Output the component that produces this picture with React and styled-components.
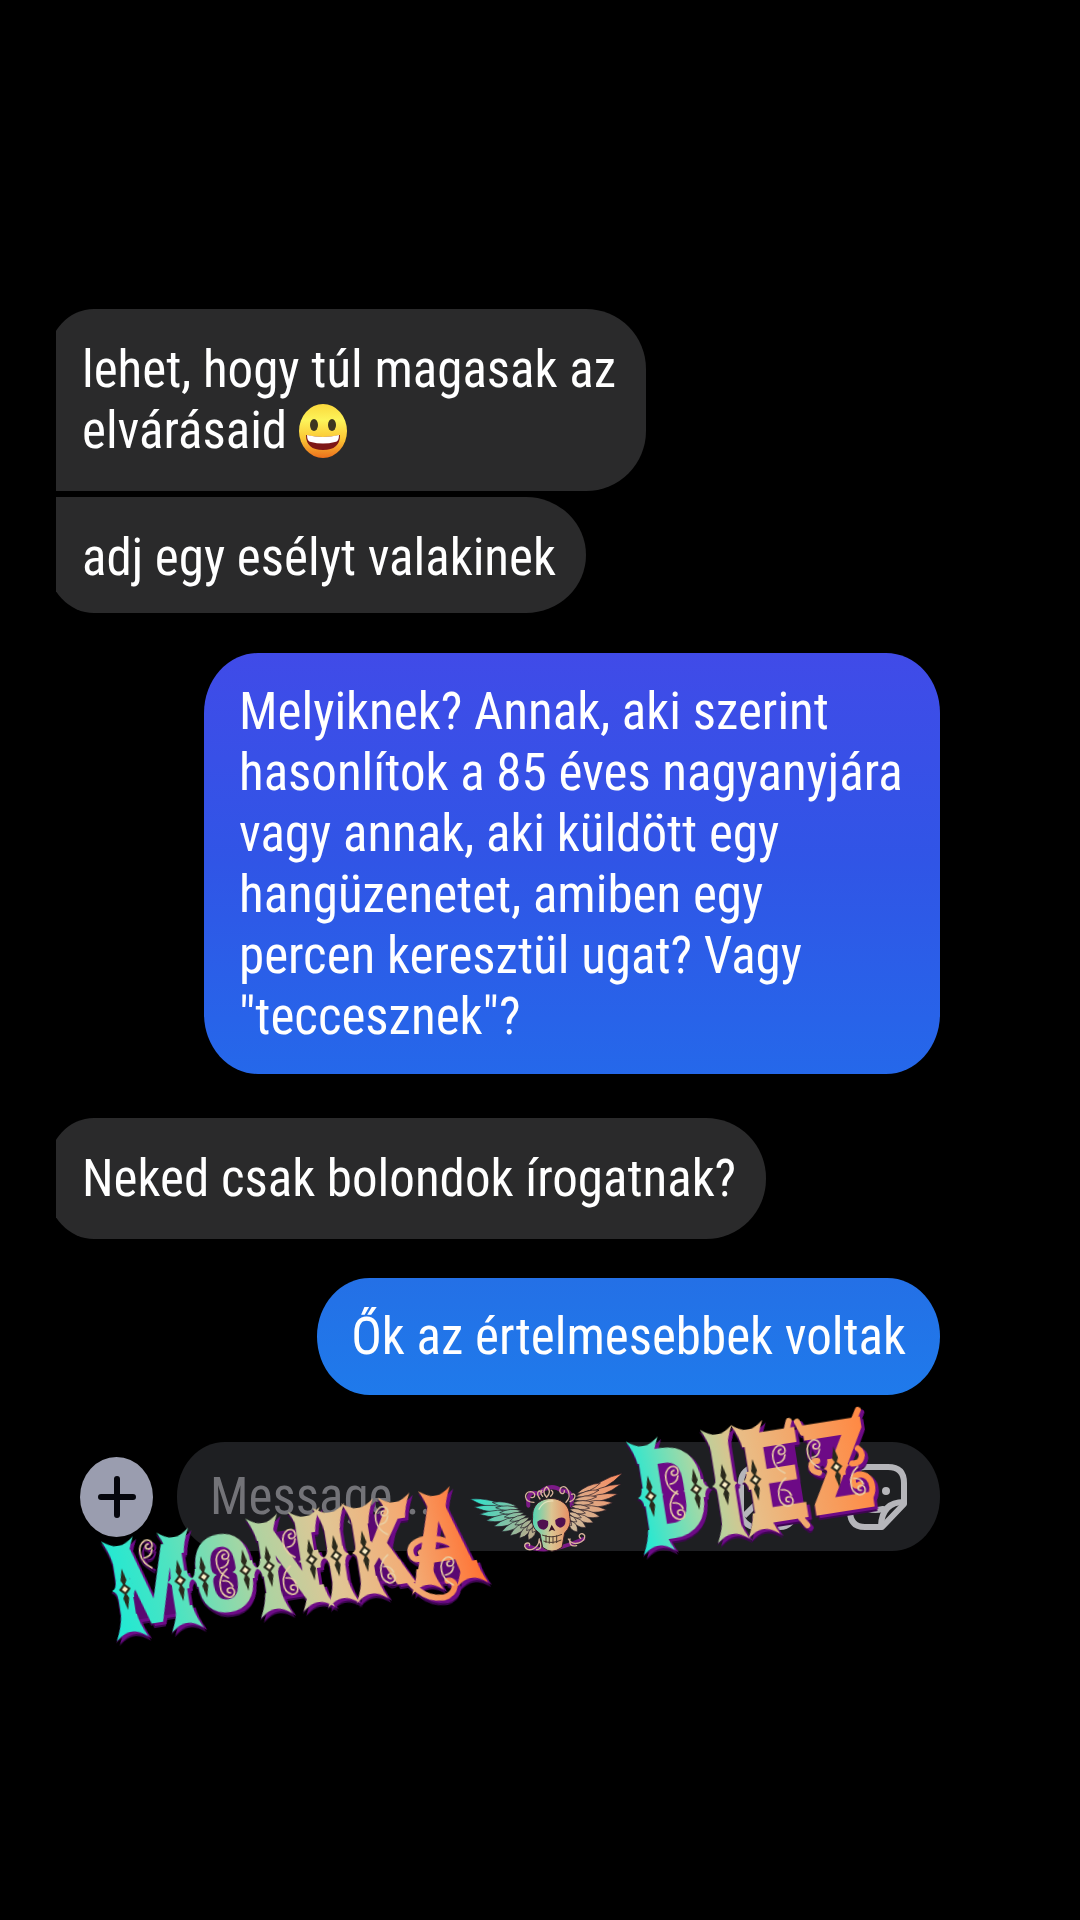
import React from 'react';
import styled, { createGlobalStyle } from 'styled-components';

const RECEIVED = [
	{ id: 1, text: 'lehet, hogy túl magasak az elvárásaid', emoji: true, shape: 'first' },
	{ id: 2, text: 'adj egy esélyt valakinek', shape: 'last' },
];

const Grin = () => (
	<EmojiSvg viewBox='0 0 48 54' role='img' aria-label='grinning face'>
		<defs>
			<linearGradient id='face' x1='0' y1='0' x2='0' y2='1'>
				<stop offset='0' stopColor='#fbd83c' />
				<stop offset='0.3' stopColor='#fdf45a' />
				<stop offset='0.65' stopColor='#fbc634' />
				<stop offset='1' stopColor='#ec6f1c' />
			</linearGradient>
		</defs>
		<ellipse cx='24' cy='27' rx='24' ry='27' fill='url(#face)' />
		<ellipse cx='15' cy='21' rx='4' ry='6' fill='#3e3620' />
		<ellipse cx='33' cy='21' rx='4' ry='6' fill='#3e3620' />
		<path d='M7 31 Q24 35 41 31 Q41 46 24 46 Q7 46 7 31Z' fill='#7d1716' />
		<path d='M8 31 Q24 35 40 31 Q40 38 36 38 Q24 41 12 38 Q8 38 8 31Z' fill='#fff' />
	</EmojiSvg>
);

const feather = ([rx, ry], [tx, ty], w) => {
	const mx = (rx + tx) / 2;
	const my = (ry + ty) / 2;
	const len = Math.hypot(tx - rx, ty - ry);
	const nx = (-(ty - ry) / len) * w;
	const ny = ((tx - rx) / len) * w;
	return `M${rx} ${ry} Q${mx + nx} ${my + ny} ${tx} ${ty} Q${mx - nx} ${my - ny} ${rx} ${ry}Z`;
};

const LEFT_TIPS = [[30, 180], [42, 204], [58, 226], [78, 245], [102, 262], [125, 278], [150, 290], [178, 298], [205, 303]];
const RIGHT_TIPS = [[487, 103], [483, 135], [473, 165], [458, 191], [440, 213], [420, 233], [400, 251], [378, 266], [352, 279]];

const Wing = ({ tips, from, to, fill }) => (
	<g fill={fill} stroke='#231a25' strokeWidth='2'>
		{tips.map((tip, i) => {
			const t = i / (tips.length - 1);
			const root = [from[0] + (to[0] - from[0]) * t, from[1] + (to[1] - from[1]) * t];
			return <path key={i} d={feather(root, tip, 20)} />;
		})}
		{tips.map((tip, i) => {
			const t = i / (tips.length - 1);
			const root = [from[0] + 20 * (to[0] > from[0] ? 1 : -1) + (to[0] - from[0]) * t * 0.8, from[1] + (to[1] - from[1]) * t - 6];
			const half = [root[0] + (tip[0] - root[0]) * 0.52, root[1] + (tip[1] - root[1]) * 0.52];
			return <path key={i} d={feather(root, half, 14)} />;
		})}
	</g>
);

const Skull = () => (
	<g transform='translate(460 1440) scale(0.3333)'>
		<g fill='none' stroke='#7b1a86' strokeWidth='12' strokeLinecap='round'>
			<path d='M205 200 Q200 150 235 165 Q270 130 305 155 Q340 150 335 200' />
			<path d='M200 320 Q260 350 370 300' />
		</g>
		<Wing tips={LEFT_TIPS} from={[150, 208]} to={[226, 262]} fill='url(#wingLeft)' />
		<Wing tips={RIGHT_TIPS} from={[370, 170]} to={[328, 245]} fill='url(#wingRight)' />
		<g fill='none' stroke='#d7b39b' strokeWidth='4' strokeLinecap='round'>
			<path d='M222 190 C190 190 190 158 212 158 C230 160 226 180 213 175' />
			<path d='M240 180 C225 160 238 150 246 160' />
			<path d='M318 190 C340 170 318 130 302 147 C292 165 315 170 313 155' />
			<path d='M330 188 C350 180 348 160 335 166' />
			<path d='M260 175 C250 165 248 152 260 143 C272 152 270 165 260 175 M248 172 Q238 160 246 154 M272 172 Q284 160 274 154' />
			<path d='M238 300 C235 335 200 340 194 322 C194 308 214 310 208 320 M238 305 Q250 330 230 332' />
			<path d='M325 300 C340 325 378 310 374 290 C366 276 350 290 362 298 M330 300 Q325 325 350 320' />
		</g>
		<path
			d='M218 235 C212 160 330 160 329 232 C334 252 328 262 322 272 L314 282 L306 325 Q275 348 248 325 L240 284 L226 272 Q214 258 218 235Z'
			fill='url(#bone)'
			stroke='#3a2029'
			strokeWidth='3'
		/>
		<path d='M232 248 Q246 236 264 246 Q268 266 252 272 Q232 272 232 248Z M286 243 Q304 230 316 240 Q320 262 300 266 Q284 262 286 243Z' fill='#50104f' />
		<path d='M275 257 L286 276 L276 272 L266 278Z' fill='#361226' />
		<path d='M246 288 Q276 300 306 286 M250 306 Q276 316 304 303 M258 288 V312 M268 291 V314 M279 291 V314 M290 289 V312' fill='none' stroke='#4d3a30' strokeWidth='3' />
		<path d='M236 212 Q250 184 280 186' fill='none' stroke='#fff1cf' strokeWidth='4' opacity='0.6' />
	</g>
);

// flared horn at the end of a stem, dir 1 points up and -1 points down
const spur = ([x, y, dir]) => {
	const at = (dx, dy) => `${x + dx} ${y + dy * dir}`;
	return `M${at(-16, -12)} Q${at(-6, -4)} ${at(0, -5)} Q${at(6, -4)} ${at(16, -12)} Q${at(9, 2)} ${at(8, 12)} L${at(-8, 12)} Q${at(-9, 2)} ${at(-16, -12)}Z`;
};

const Ornaments = ({ spurs, diamonds, scrolls, curls, fill }) => (
	<g>
		<g fill={fill}>
			{spurs.map((s, i) => (
				<path key={i} d={spur(s)} />
			))}
			{diamonds.map(([x, y], i) => (
				<path key={i} d={`M${x - 13} ${y} Q${x - 8} ${y - 2} ${x - 8} ${y - 9} H${x + 8} Q${x + 8} ${y - 2} ${x + 13} ${y} Q${x + 8} ${y + 2} ${x + 8} ${y + 9} H${x - 8} Q${x - 8} ${y + 2} ${x - 13} ${y}Z`} />
			))}
		</g>
		<path d={curls} fill='none' stroke={fill} strokeWidth='6' strokeLinecap='round' />
		{diamonds.map(([x, y], i) => (
			<g key={i}>
				<path
					d={`M${x} ${y - 21} L${x + 3} ${y - 9} L${x + 1} ${y - 5} L${x + 6} ${y} L${x + 1} ${y + 5} L${x + 3} ${y + 9} L${x} ${y + 21} L${x - 3} ${y + 9} L${x - 1} ${y + 5} L${x - 6} ${y} L${x - 1} ${y - 5} L${x - 3} ${y - 9}Z`}
					fill='#2a2a1c'
				/>
				<path d={`M${x} ${y - 3} L${x + 3} ${y} L${x} ${y + 3} L${x - 3} ${y}Z`} fill='#fbeec6' />
			</g>
		))}
		<g fill='none' stroke='#e9cfa4' strokeWidth='1.6' strokeLinecap='round'>
			{scrolls.map(([x, y, dir], i) => (
				<path
					key={i}
					d={`M${x + 3} ${y + 17 * dir} c-12 ${-8 * dir} -12 ${-24 * dir} -3 ${-28 * dir} c8 ${-2 * dir} 9 ${9 * dir} 3 ${9 * dir} c-4 0 -4 ${-5 * dir} 0 ${-5 * dir} M${x - 3} ${y + 6 * dir} q7 0 9 ${-7 * dir}`}
				/>
			))}
		</g>
	</g>
);

const Wordmark = () => (
	<Artwork viewBox='90 1400 800 270'>
		<defs>
			<linearGradient id='monika' gradientUnits='userSpaceOnUse' x1='0' y1='0' x2='366' y2='-30'>
				<stop offset='0' stopColor='#1fe9d4' />
				<stop offset='0.18' stopColor='#4fe3c0' />
				<stop offset='0.38' stopColor='#a3d6a4' />
				<stop offset='0.62' stopColor='#e2c594' />
				<stop offset='0.82' stopColor='#f3ab74' />
				<stop offset='1' stopColor='#ff7436' />
			</linearGradient>
			<linearGradient id='diez' gradientUnits='userSpaceOnUse' x1='0' y1='0' x2='236' y2='-20'>
				<stop offset='0' stopColor='#1fe9d4' />
				<stop offset='0.28' stopColor='#a9d8a4' />
				<stop offset='0.5' stopColor='#e9bd86' />
				<stop offset='1' stopColor='#ff8a45' />
			</linearGradient>
			<linearGradient id='wingLeft' gradientUnits='userSpaceOnUse' x1='30' y1='180' x2='220' y2='260'>
				<stop offset='0' stopColor='#27e6cf' />
				<stop offset='1' stopColor='#b6ab8c' />
			</linearGradient>
			<linearGradient id='wingRight' gradientUnits='userSpaceOnUse' x1='330' y1='250' x2='487' y2='105'>
				<stop offset='0' stopColor='#cdb99a' />
				<stop offset='1' stopColor='#fb8a5e' />
			</linearGradient>
			<linearGradient id='bone' x1='0' x2='1'>
				<stop offset='0' stopColor='#4fd6b4' />
				<stop offset='0.5' stopColor='#dcc592' />
				<stop offset='1' stopColor='#e88d62' />
			</linearGradient>
		</defs>
		<Word transform='translate(117 1630) rotate(-9)'>
			<path d='M15 -56 L41 -8 L68 -56 V-6 H15Z M103 -62 h24 v49 h-24Z M162 -71 H203 V-6 H162Z M259 -75 L293 -70 L282 -40 L297 -6 H259Z M318 -30 H350 L359 4 H310Z' fill='#5a0872' />
			<Letters fill='url(#monika)'>MONIKA</Letters>
			<Ornaments
				fill='url(#monika)'
				spurs={[[14, -77, 1], [70, -77, 1], [14, 0, -1], [70, 0, -1], [160, -77, 1], [203, -77, 1], [160, 0, -1], [203, 0, -1], [228, -77, 1], [228, 0, -1], [257, -77, 1], [257, 0, -1], [294, -77, 1], [335, -77, 1], [313, 0, -1], [358, 0, -1]]}
				diamonds={[[14, -38], [70, -38], [94, -38], [136, -38], [160, -38], [203, -38], [228, -38], [257, -38]]}
				scrolls={[[41, -72, 1], [115, -50, 1], [115, -25, -1], [184, -60, 1], [178, -18, -1], [279, -68, 1], [276, -14, -1], [336, -8, 1]]}
				curls='M288 -22 C294 2 308 20 328 20 C342 18 344 4 334 4 M348 -28 C330 -46 300 -44 302 -28 C304 -18 316 -22 312 -28'
			/>
		</Word>
		<Word transform='translate(644 1544) rotate(-9)' $large>
			<path d='M21 -78 h31 v66 h-31Z M124 -84 h37 v78 h-37Z M171 -87 h41 l-20 45Z M228 -4 h-41 l24 -45 l17 16Z' fill='#6d0a86' />
			<Letters fill='url(#diez)'>DIEZ</Letters>
			<Ornaments
				fill='url(#diez)'
				spurs={[[14, -91, 1], [14, 0, -1], [89, -91, 1], [89, 0, -1], [120, -91, 1], [120, 0, -1]]}
				diamonds={[[14, -45], [60, -45], [89, -45], [120, -45], [202, -45]]}
				scrolls={[[38, -60, 1], [38, -29, -1], [147, -64, 1], [147, -25, -1], [182, -64, 1], [220, -25, -1]]}
				curls='M158 -88 L162 -98 M158 -2 L164 8 M174 -84 L170 -96 M226 -88 L232 -98 M218 -4 C238 -4 240 -34 222 -34 C212 -32 216 -20 222 -24 M184 -42 C174 -44 176 -56 184 -54 M218 -46 C228 -44 232 -54 226 -60'
			/>
		</Word>
		<Skull />
	</Artwork>
);

const App = () => (
	<Page>
		<GlobalStyle />
		<Thread>
			{RECEIVED.map((m) => (
				<Received key={m.id} $shape={m.shape}>
					{m.text} {m.emoji && <Grin />}
				</Received>
			))}
			<Sent $tall>
				Melyiknek? Annak, aki szerint hasonlítok a 85 éves nagyanyjára vagy annak, aki küldött egy hangüzenetet,
				amiben egy percen keresztül ugat? Vagy "teccesznek"?
			</Sent>
			<Received $shape='single'>Neked csak bolondok írogatnak?</Received>
			<Sent>Ők az értelmesebbek voltak</Sent>
		</Thread>
		<Composer>
			<AddButton type='button' aria-label='Add'>
				<svg width='38' height='42' viewBox='0 0 38 42'>
					<path d='M19 3 V39 M3 21 H35' stroke='#05060c' strokeWidth='6' strokeLinecap='round' />
				</svg>
			</AddButton>
			<Field>
				<MessageInput placeholder='Message...' aria-label='Message' />
				<IconButton type='button' aria-label='Gallery'>
					<svg width='60' height='66' viewBox='0 0 60 66' fill='none' stroke='#b5b5ba' strokeWidth='6' strokeLinejoin='round'>
						<rect x='3' y='3' width='54' height='60' rx='15' />
						<circle cx='20' cy='22' r='5' />
						<path d='M6 52 L20 38 L31 50 L42 34 L57 48' />
					</svg>
				</IconButton>
				<IconButton type='button' aria-label='Sticker'>
					<svg width='60' height='66' viewBox='0 0 60 66' fill='none' stroke='#b5b5ba' strokeWidth='6' strokeLinejoin='round'>
						<path d='M18 3 H41 Q57 3 57 19 V40 L35 63 H18 Q3 63 3 47 V19 Q3 3 18 3Z' />
						<path d='M57 38 Q35 38 34 62' />
						<path d='M16 42 Q24 48 36 45' strokeLinecap='round' />
						<circle cx='20' cy='27' r='4' fill='#b5b5ba' stroke='none' />
						<circle cx='39' cy='27' r='4' fill='#b5b5ba' stroke='none' />
					</svg>
				</IconButton>
			</Field>
			<Wordmark />
		</Composer>
	</Page>
);

export default App;

const GlobalStyle = createGlobalStyle`
	* {
		box-sizing: border-box;
	}
	body {
		margin: 0;
		background: #000;
	}
`;

const Page = styled.main`
	min-height: 100vh;
	padding: 309px 140px 0 56px;
	background: #000;
	color: #fff;
	font-family: 'Roboto Condensed', Roboto, sans-serif;
	font-size: 51px;
	line-height: 61px;
`;

const Thread = styled.section`
	display: flex;
	flex-direction: column;
	overflow: hidden;
`;

const shapes = {
	first: { radius: '46px 60px 60px 0 / 50px 60px 60px 0', padding: '30px 24px 30px 34px' },
	last: { radius: '0 60px 60px 46px / 0 58px 58px 50px', padding: '30px 30px 25px 34px' },
	single: { radius: '46px 60px 60px 46px / 50px 60px 60px 50px', padding: '30px 30px 30px 34px' },
};

const Received = styled.p`
	align-self: flex-start;
	max-width: ${(p) => (p.$shape === 'single' ? 'none' : '598px')};
	margin: ${(p) => (p.$shape === 'single' ? '38px 0 0 -8px' : '0 0 6px -8px')};
	padding: ${(p) => shapes[p.$shape].padding};
	border-radius: ${(p) => shapes[p.$shape].radius};
	background: #2a2a2b;
`;

const Sent = styled.p`
	align-self: flex-end;
	max-width: 736px;
	margin: ${(p) => (p.$tall ? '34px 0 6px' : '39px 0 0')};
	padding: ${(p) => (p.$tall ? '28px 34px 27px 35px' : '28px 34px')};
	border-radius: 54px / 60px;
	background: ${(p) =>
		p.$tall ? 'linear-gradient(#404be8, #3055e6 50%, #2568ea)' : 'linear-gradient(#2470e6, #1f7aeb)'};
`;

const EmojiSvg = styled.svg`
	width: 48px;
	height: 54px;
	margin: -10px 0;
	vertical-align: baseline;
`;

const Composer = styled.form`
	position: relative;
	display: flex;
	align-items: center;
	gap: 24px;
	margin: 47px 0 0 24px;
`;

const AddButton = styled.button`
	display: grid;
	flex: none;
	place-items: center;
	width: 73px;
	height: 80px;
	padding: 0;
	border: 0;
	border-radius: 50%;
	background: #9a9daf;
`;

const Field = styled.div`
	display: flex;
	flex: 1;
	align-items: center;
	gap: 49px;
	min-width: 0;
	height: 109px;
	padding: 0 33px;
	border-radius: 48px / 54px;
	background: #1e1f22;
`;

const MessageInput = styled.input`
	flex: 1;
	width: 0;
	min-width: 0;
	padding: 0;
	border: 0;
	outline: 0;
	background: none;
	color: #fff;
	font: inherit;
	&::placeholder {
		color: #737378;
		opacity: 1;
	}
`;

const IconButton = styled.button`
	display: flex;
	flex: none;
	padding: 0;
	border: 0;
	background: none;
`;

const Artwork = styled.svg`
	position: absolute;
	top: -43px;
	left: 10px;
	width: 800px;
	height: 270px;
	overflow: visible;
	pointer-events: none;
`;

const Word = styled.g`
	font-size: ${(p) => (p.$large ? 128 : 108)}px;
	line-height: 1;
	filter: drop-shadow(3px 3px 0 #6d0a86) drop-shadow(-1px 2px 0 #3d0650);
`;

const Letters = styled.text`
	font-family: 'Roboto Condensed', 'Liberation Serif', serif;
	font-weight: 700;
`;
